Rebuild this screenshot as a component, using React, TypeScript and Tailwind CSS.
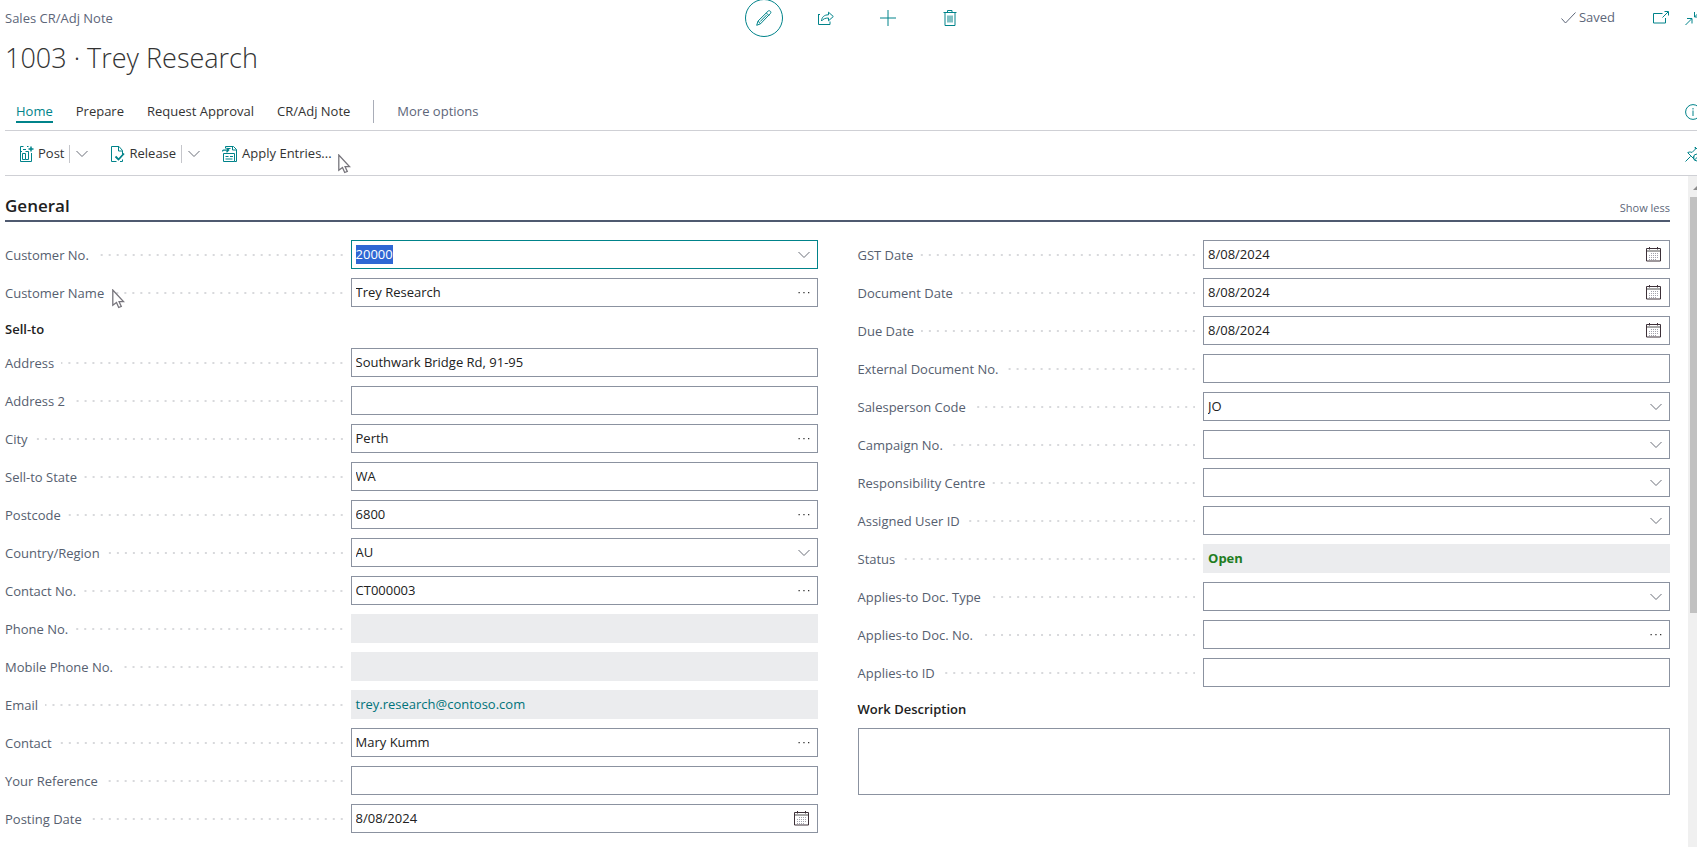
import { useEffect, useRef } from "react";
import type { ReactNode } from "react";

type FieldKind = "text" | "lookup" | "assist" | "date" | "readonly" | "link" | "status";

type Field = {
  id: string;
  label: string;
  value?: string;
  kind: FieldKind;
};

const topFields: Field[] = [
  { id: "customer-no", label: "Customer No.", value: "20000", kind: "lookup" },
  { id: "customer-name", label: "Customer Name", value: "Trey Research", kind: "assist" },
];

const sellToFields: Field[] = [
  { id: "address", label: "Address", value: "Southwark Bridge Rd, 91-95", kind: "text" },
  { id: "address-2", label: "Address 2", kind: "text" },
  { id: "city", label: "City", value: "Perth", kind: "assist" },
  { id: "state", label: "Sell-to State", value: "WA", kind: "text" },
  { id: "postcode", label: "Postcode", value: "6800", kind: "assist" },
  { id: "country", label: "Country/Region", value: "AU", kind: "lookup" },
  { id: "contact-no", label: "Contact No.", value: "CT000003", kind: "assist" },
  { id: "phone", label: "Phone No.", kind: "readonly" },
  { id: "mobile", label: "Mobile Phone No.", kind: "readonly" },
  { id: "email", label: "Email", value: "trey.research@contoso.com", kind: "link" },
  { id: "contact", label: "Contact", value: "Mary Kumm", kind: "assist" },
  { id: "reference", label: "Your Reference", kind: "text" },
  { id: "posting-date", label: "Posting Date", value: "8/08/2024", kind: "date" },
];

const rightFields: Field[] = [
  { id: "gst-date", label: "GST Date", value: "8/08/2024", kind: "date" },
  { id: "document-date", label: "Document Date", value: "8/08/2024", kind: "date" },
  { id: "due-date", label: "Due Date", value: "8/08/2024", kind: "date" },
  { id: "external-no", label: "External Document No.", kind: "text" },
  { id: "salesperson", label: "Salesperson Code", value: "JO", kind: "lookup" },
  { id: "campaign", label: "Campaign No.", kind: "lookup" },
  { id: "centre", label: "Responsibility Centre", kind: "lookup" },
  { id: "user-id", label: "Assigned User ID", kind: "lookup" },
  { id: "status", label: "Status", value: "Open", kind: "status" },
  { id: "applies-type", label: "Applies-to Doc. Type", kind: "lookup" },
  { id: "applies-no", label: "Applies-to Doc. No.", kind: "assist" },
  { id: "applies-id", label: "Applies-to ID", kind: "text" },
];

function Icon({ children, className = "" }: { children: ReactNode; className?: string }) {
  return (
    <svg
      width="16"
      height="16"
      viewBox="0 0 16 16"
      fill="none"
      stroke="currentColor"
      aria-hidden="true"
      className={`shrink-0 ${className}`}
    >
      {children}
    </svg>
  );
}

const Chevron = () => (
  <svg width="12" height="8" viewBox="0 0 12 8" fill="none" stroke="#6b6f78" aria-hidden="true">
    <path d="M.5 1l5.5 5.5L11.5 1" />
  </svg>
);

const Dots = () => (
  <svg width="12" height="2" viewBox="0 0 12 2" fill="#333" aria-hidden="true">
    <path d="M.5 0h1.300v1.200H.5zM5.300 0h1.300v1.200H5.300zM10 0h1.300v1.200H10z" />
  </svg>
);

const Calendar = () => (
  <svg width="16" height="15" viewBox="0 0 16 15" fill="none" aria-hidden="true">
    <path d="M.5 1.500h14v12.500H.5z" stroke="#3d3038" />
    <path d="M1 4h13" stroke="#8b8b8b" strokeWidth="1.500" />
    <path d="M3.500 0v2.500M11.500 0v2.500" stroke="#3d3038" />
    <path d="M3.500 8v5M5.500 6v7M7.500 6v7M9.500 6v7M11.500 6v5" stroke="#a3a3ad" strokeDasharray="1 1" />
  </svg>
);

const Cursor = ({ className }: { className: string }) => (
  <svg
    width="13"
    height="20"
    viewBox="0 0 13 20"
    fill="#fff"
    stroke="#77757c"
    strokeWidth="1.3"
    aria-hidden="true"
    className={`pointer-events-none absolute ${className}`}
  >
    <path d="M.8 1v15.2l3.7-2.8 2.2 5.1 2.6-1.1-2.2-4.7h4.6z" />
  </svg>
);

function FieldControl({ field }: { field: Field }) {
  const { id, kind, value = "", label } = field;
  const ref = useRef<HTMLInputElement>(null);

  useEffect(() => {
    if (id === "customer-no") {
      ref.current?.focus();
      ref.current?.select();
    }
  }, [id]);

  if (kind === "link") {
    return (
      <div className="flex h-[29px] items-center bg-[#ebecee] px-[5px]">
        <a id={id} href={`mailto:${value}`} className="text-[#00737a]">
          {value}
        </a>
      </div>
    );
  }

  if (kind === "status") {
    return (
      <output id={id} className="flex h-[29px] items-center bg-[#ebecee] px-[5px] font-bold text-[#1f7d1f]">
        {value}
      </output>
    );
  }

  if (kind === "readonly") {
    return <input id={id} readOnly value={value} className="block h-[29px] w-full bg-[#ebecee] px-[5px]" />;
  }

  if (kind === "lookup" && id !== "customer-no") {
    return (
      <div className="grid h-[29px] items-center border border-[#8b92a0]">
        <select
          id={id}
          defaultValue={value}
          className="col-start-1 row-start-1 h-full w-full appearance-none bg-transparent px-1 outline-none"
        >
          <option value={value}>{value}</option>
        </select>
        <span className="pointer-events-none col-start-1 row-start-1 justify-self-end pr-[7px]">
          <Chevron />
        </span>
      </div>
    );
  }

  return (
    <div className="flex h-[29px] items-center border border-[#8b92a0] focus-within:border-[#00838a]">
      <input
        ref={ref}
        id={id}
        type="text"
        defaultValue={value}
        className="h-[19px] min-w-0 flex-1 px-1 leading-[19px] outline-none selection:bg-[#2f67d4] selection:text-white"
      />
      {kind !== "text" && (
        <button type="button" aria-label={`Look up ${label}`} className="flex h-full items-center px-[7px]">
          {kind === "date" ? <Calendar /> : kind === "assist" ? <Dots /> : <Chevron />}
        </button>
      )}
    </div>
  );
}

function FieldRow({ field }: { field: Field }) {
  return (
    <div className="grid grid-cols-[37fr_50fr] items-center">
      <div className="flex items-center">
        <label htmlFor={field.id} className="pt-0.5 whitespace-nowrap text-[#56606f]">
          {field.label}
        </label>
        <span className="mr-2 ml-[7px] h-0.5 flex-1 bg-[linear-gradient(to_left,#d8d9dc_2px,transparent_2px)] bg-[length:8px_2px] bg-right bg-repeat-x" />
      </div>
      <FieldControl field={field} />
    </div>
  );
}

function PageHeader() {
  return (
    <header className="grid grid-cols-[1fr_auto_1fr] items-start">
      <div>
        <p className="pt-2 leading-5 text-[#5d6679]">Sales CR/Adj Note</p>
        <h1 className="pt-2.5 text-[27px] leading-10 font-light text-[#333]">1003 · Trey Research</h1>
      </div>
      <div className="flex h-9 items-center text-[#00838a]">
        <button type="button" aria-label="Edit" className="flex w-[62px] justify-center">
          <span className="-my-1 flex size-[38px] items-center justify-center rounded-full border border-[#00838a]">
            <Icon>
              <path d="M.7 15.3l1.3-4.2L12 1.2c.7-.7 1.6-.6 2.3 0s.8 1.600 0 2.400L4.500 13.800zM10.300 2.900l2.700 2.700M2 11.100l2.500 2.700M4.200 11.600l6.600-6.800" />
            </Icon>
          </span>
        </button>
        <button type="button" aria-label="Share" className="flex w-[62px] justify-center">
          <Icon>
            <path d="M.5 4v10.500h11.500v-3M3.500 11c.3-4 2.700-6.200 7-6.200V2.200l4.800 4.300-4.800 4.300V8c-3.300 0-5.300.9-7 3zM.5 4.500H2" />
          </Icon>
        </button>
        <button type="button" aria-label="New" className="flex w-[62px] justify-center">
          <Icon>
            <path d="M8 0v16M0 8h16" />
          </Icon>
        </button>
        <button type="button" aria-label="Delete" className="flex w-[62px] justify-center">
          <Icon>
            <path d="M1.500 2.500h13M5.500 2.500v-2h4.500v2M3 3v12.500h10V3M6 5.500v7M8 5.500v7M10 5.500v7" />
          </Icon>
        </button>
      </div>
      <div className="flex h-9 items-center justify-end pr-[7px] text-[#00838a]">
        <span className="mr-[38px] flex items-center gap-[3px] text-[#5d6679]">
          <svg width="15" height="12" viewBox="0 0 15 12" fill="none" stroke="currentColor" aria-hidden="true">
            <path d="M.5 6.500l4 4.500L14.500.5" />
          </svg>
          Saved
        </span>
        <button type="button" aria-label="Open in new window" className="mr-4">
          <Icon>
            <path d="M9.500 3.500H.5v9.500h12V8M9.500 7.500l5.500-5.500M11.500 1.500h4v4" />
          </Icon>
        </button>
        <button type="button" aria-label="Collapse">
          <Icon>
            <path d="M.5 15L6.500 9M2 8.500h5V13.500M15.500 1L9.500 7M9.500 2v5h5" />
          </Icon>
        </button>
      </div>
    </header>
  );
}

function ActionBar() {
  const tabs = ["Prepare", "Request Approval", "CR/Adj Note"];

  return (
    <>
      <nav className="flex items-center border-b border-[#cfd0d5] pt-[22px] pr-[7px] pb-[7px] pl-[11px] leading-[20px]">
        <div className="flex items-center gap-[23px] text-[#333]">
          <button type="button" className="border-b-2 border-[#00838a] text-[#00838a]">
            Home
          </button>
          {tabs.map((tab) => (
            <button key={tab} type="button" className="border-b-2 border-transparent">
              {tab}
            </button>
          ))}
          <span className="h-[23px] w-px bg-[#a9adb8]" />
          <button type="button" className="border-b-2 border-transparent text-[#5d6679]">
            More options
          </button>
        </div>
        <button type="button" aria-label="Details" className="ml-auto text-[#00838a]">
          <Icon>
            <circle cx="8" cy="8" r="7.400" />
            <path d="M8 6.500V12M8 4v1.500" />
          </Icon>
        </button>
      </nav>
      <div className="relative flex h-[45px] items-center border-b border-[#cfd0d5] pt-0.5 pr-[7px] pl-[14px] text-[#333]">
        <button type="button" className="flex items-center gap-[3px]">
          <Icon className="text-[#00838a]">
            <path d="M4.500.500H1.500v15h11V7M4 3.500h3M8 .5h1.500M3.500 13.500v-6h3v6h-3M6.500 5.500h3v8h-3M1 5.500h2" />
            <path d="M12 .5v5M9.500 3h5" strokeWidth="1.500" />
          </Icon>
          Post
        </button>
        <span className="ml-[5px] h-[18px] w-px bg-[#c5c6cb]" />
        <button type="button" aria-label="More post options" className="mr-4 px-1.5">
          <Chevron />
        </button>
        <button type="button" className="flex items-center gap-[3px]">
          <Icon className="text-[#00838a]">
            <path d="M6.500 15.500h-5V.5h7.500l3.500 4v4M8.500.5v4.500h4M12.500 13.500v2H10" />
            <path d="M5.500 10.500l3 3 5.500-6" strokeWidth="1.800" />
          </Icon>
          Release
        </button>
        <span className="ml-[5px] h-[18px] w-px bg-[#c5c6cb]" />
        <button type="button" aria-label="More release options" className="mr-4 px-1.5">
          <Chevron />
        </button>
        <button type="button" className="flex items-center gap-1">
          <Icon className="text-[#00838a]">
            <path d="M3.500 2.500v-2h8l3 3v12h-2M10.500.500v3.500h4M1.500 7.500h11v8h-11zM3.500 10.500h3M8 10.500h3M3.500 13h7M5.500 2.500h3" />
            <path d="M.5 5.500c0-1.500 1-1.500 5.500-1.500M4.500 2l2.200 2-2.200 2.200" strokeWidth="1.300" />
          </Icon>
          Apply Entries...
        </button>
        <Cursor className="top-[23px] left-[333px]" />
        <button type="button" aria-label="Pin" className="ml-auto text-[#00838a]">
          <Icon>
            <path d="M.5 15.500l5-5M2.500 6.500l7 7M3 6.500c1.500-.8 3-.5 4 0l3.500-3.500-.5-2L15 6M8.500 12.500c.5-.8.500-1.500 0-2.500" />
            <circle cx="12" cy="11.500" r="3.500" />
            <path d="M9.500 14l5-5" />
          </Icon>
        </button>
      </div>
    </>
  );
}

export default function App() {
  return (
    <div className="flex h-screen flex-col overflow-hidden bg-white font-['Open_Sans','Noto_Sans',sans-serif] text-[13px] text-[#212121]">
      <div className="-mr-[11px] shrink-0 pl-[5px]">
        <PageHeader />
        <ActionBar />
      </div>
      <div className="flex min-h-0 flex-1">
        <main className="min-w-0 flex-1 overflow-hidden pr-[18px] pl-[5px]">
          <div className="flex h-[46px] items-center justify-between border-b-2 border-[#4f5a70] pt-4">
            <h2 className="text-[17px] font-semibold">General</h2>
            <button type="button" className="pt-1 text-[11px] text-[#5d6679]">
              Show less
            </button>
          </div>
          <form className="grid grid-cols-2 gap-x-10 pt-[18px]">
            <div className="flex flex-col gap-[9px]">
              <div className="relative flex flex-col gap-[9px]">
                {topFields.map((field) => (
                  <FieldRow key={field.id} field={field} />
                ))}
                <Cursor className="top-[49px] left-[107px]" />
              </div>
              <h3 className="h-[23px] leading-[26px] font-semibold">Sell-to</h3>
              {sellToFields.map((field) => (
                <FieldRow key={field.id} field={field} />
              ))}
            </div>
            <div className="flex flex-col gap-[9px]">
              {rightFields.map((field) => (
                <FieldRow key={field.id} field={field} />
              ))}
              <label htmlFor="work-description" className="h-[23px] leading-[26px] font-semibold">
                Work Description
              </label>
              <textarea
                id="work-description"
                className="block h-[67px] w-full resize-none border border-[#8b92a0] px-1 outline-none"
              />
            </div>
          </form>
        </main>
        <div className="flex w-[9px] shrink-0 flex-col overflow-hidden bg-[#f0f0f0] pl-0.5" aria-hidden="true">
          <svg width="14" height="21" viewBox="0 0 14 21" fill="#8b8b8b" className="shrink-0">
            <path d="M3 14l4.500-4.500 4.500 4.500z" />
          </svg>
          <div className="h-[62%] w-full bg-[#c1c1c1]" />
        </div>
      </div>
    </div>
  );
}
